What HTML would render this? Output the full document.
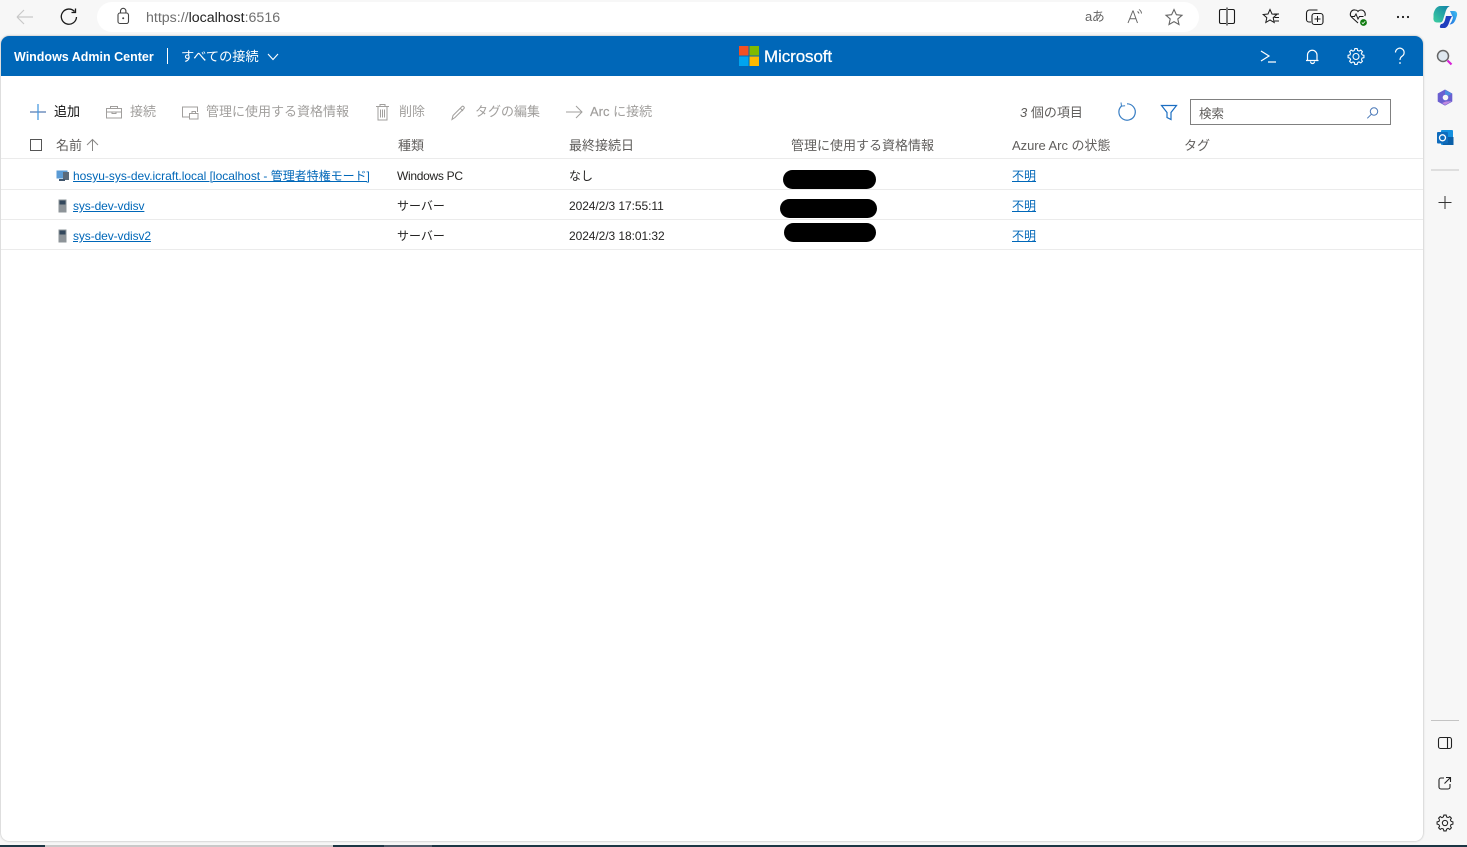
<!DOCTYPE html>
<html lang="ja"><head><meta charset="utf-8"><title>Windows Admin Center</title>
<style>
html,body{margin:0;padding:0;width:1467px;height:847px;overflow:hidden;background:#f7f7f7;font-family:"Liberation Sans","Noto Sans CJK JP",sans-serif;}
.t{position:absolute;white-space:nowrap;line-height:18px;font-size:12px;}
.g{color:#a19f9d}
.h{color:#605e5c;font-size:13px}
.b{color:#252423}
a{color:#0067b8;text-decoration:underline}
svg{position:absolute;overflow:visible}
.l{position:absolute;left:1px;width:1422px;height:1px;background:#ebebeb}
.r{position:absolute;background:#000;border-radius:10px}
</style></head><body>
<!-- address bar -->
<div style="position:absolute;left:97px;top:2px;width:1102px;height:30px;background:#fff;border-radius:15px"></div>
<svg style="left:0;top:0" width="1467" height="36" fill="none">
<defs>
<linearGradient id="cl" x1="0" y1="1" x2="1" y2="0"><stop offset="0" stop-color="#3fd0a0"/><stop offset="1" stop-color="#0f7fa8"/></linearGradient>
<linearGradient id="cr" x1="0" y1="1" x2="1" y2="0"><stop offset="0" stop-color="#1f6fe0"/><stop offset="1" stop-color="#3fc0f0"/></linearGradient>
</defs>
<path d="M17 17H33M17 17l7-7M17 17l7 7" stroke="#c8c8c8" stroke-width="1.2"/>
<path d="M74.5 11.5A7.6 7.6 0 1 0 76.5 17M75.5 8.5v4h-4" stroke="#1a1a1a" stroke-width="1.3"/>
<rect x="118" y="13" width="10.5" height="10.5" rx="2" stroke="#444" stroke-width="1.1"/><path d="M120.5 13v-2a2.7 2.7 0 0 1 5.400 0v2" stroke="#444" stroke-width="1.1"/><circle cx="123.200" cy="18.300" r="1" fill="#444"/>
<path d="M1133 10.500l-5 12.500M1133 10.500l4.500 12.500M1130 18.800h6" stroke="#666" stroke-width="1"/><path d="M1139 9.500a5 5 0 0 1 2.500 4M1137.500 11.500a3 3 0 0 1 1.500 2" stroke="#666"/>
<path d="M1174 9.500l2.400 5.200 5.600.6-4.200 3.700 1.200 5.500-5-2.900-5 2.900 1.200-5.500-4.200-3.700 5.600-.6z" stroke="#666" stroke-width="1.100"/>
<path d="M1226 10h-5a1.500 1.500 0 0 0-1.500 1.500v11a1.500 1.500 0 0 0 1.500 1.500h5M1228 10h5a1.500 1.500 0 0 1 1.500 1.500v11a1.500 1.500 0 0 1-1.500 1.500h-5M1227 8v18" stroke="#1a1a1a" stroke-width="1.100" transform="translate(0 -.5)"/>
<path d="M1270 9.500l2 4.500 4.800.5-3.600 3.200 1 4.800-4.200-2.500-4.200 2.500 1-4.800-3.600-3.200 4.800-.5z" stroke="#1a1a1a" stroke-width="1"/><path d="M1274 14h5M1274.500 17.500h4.500M1274.500 21h4.500" stroke="#1a1a1a" stroke-width="1"/>
<path d="M1311 22h-2a2.500 2.500 0 0 1-2.500-2.500v-6.500a3 3 0 0 1 3-3h8" stroke="#1a1a1a" stroke-width="1.100"/><rect x="1312" y="13.500" width="11" height="11" rx="2.500" stroke="#1a1a1a" stroke-width="1.100"/><path d="M1317.500 16v6M1314.500 19h6" stroke="#1a1a1a" stroke-width="1"/>
<path d="M1358 23l-6-5.500a4.200 4.200 0 0 1 3-7.500c1.500 0 2.500.7 3 1.500.5-.8 1.500-1.500 3-1.500a4.200 4.200 0 0 1 3.800 6" stroke="#1a1a1a" stroke-width="1.100"/><path d="M1351 16.500h3.500l1.500-2.500 2 5 1.500-2.500h4" stroke="#1a1a1a" stroke-width="1"/><circle cx="1363.500" cy="22.500" r="3.400" fill="#107c10"/><path d="M1361.800 22.500l1.200 1.200 2.200-2.300" stroke="#fff" stroke-width=".8"/>
<circle cx="1398" cy="17" r="1.100" fill="#1a1a1a"/><circle cx="1403" cy="17" r="1.100" fill="#1a1a1a"/><circle cx="1408" cy="17" r="1.100" fill="#1a1a1a"/>
<path d="M1441 24c2 0 3-1 4-4l1-4h6l-2 4c-1 3-2 7-5 8h-4c-1.500 0-1.500-2 0-4z" fill="#1f3fbf"/>
<path d="M1450 11h4c2.500 0 3.500 2 3 4.500l-1 3c-1 3.500-3 6-6.500 6 2-2 2.500-4 3.500-7z" fill="url(#cr)"/>
<path d="M1433.500 14c.8-4 3-8 7-8h9.500c-2.500 1-3.500 3-4.500 6l-2.500 8c-.5 1.500-1.500 2.500-3 2.500h-3c-2.500 0-4-2-3.500-5z" fill="url(#cl)"/>
</svg>
<div class="t" style="left:146px;top:9px;font-size:14.200px;color:#6f6f6f">https://<span style="color:#222">localhost</span>:6516</div>
<div class="t" style="left:1085px;top:8px;font-size:13px;color:#666;letter-spacing:-.5px">aあ</div>

<!-- app panel -->
<div style="position:absolute;left:1px;top:36px;width:1422px;height:805px;background:#fff;border-radius:8px;box-shadow:0 0 2px rgba(0,0,0,.3);overflow:hidden">
<div style="height:40px;background:#0067b8"></div>
</div>
<div class="t" style="left:14px;top:48px;font-size:12.500px;font-weight:bold;color:#fff">Windows Admin Center</div>
<div style="position:absolute;left:167px;top:48px;width:1px;height:16px;background:#fff"></div>
<div class="t" style="left:181px;top:48px;font-size:13.200px;color:#fff">すべての接続</div>
<svg style="left:0;top:0" width="1467" height="847" fill="none">
<path d="M268 54l5 5.500 5-5.500" stroke="#fff" stroke-width="1.100"/>
<rect x="739" y="46" width="9.500" height="9.500" fill="#f25022"/><rect x="749.500" y="46" width="9.500" height="9.500" fill="#7fba00"/><rect x="739" y="56.500" width="9.500" height="9.500" fill="#00a4ef"/><rect x="749.500" y="56.500" width="9.500" height="9.500" fill="#ffb900"/>
<path d="M1261 51l8 5-8 5M1268 62h8" stroke="#fff" stroke-width="1.200"/>
<path d="M1306 60.500h12.500M1307.500 60.500v-5.500a4.700 4.700 0 0 1 9.500 0v5.500M1310.500 61.500a2 2 0 0 0 4 0" stroke="#fff" stroke-width="1.200"/>
<g transform="translate(1356 56.500) scale(1.150)" stroke="#fff" stroke-width=".95"><circle r="2.600"/><path d="M-1.400-5.200L-1-6.900H1L1.400-5.200Q2.100-5 2.700-4.700"/><path transform="rotate(45)" d="M-1.400-5.200L-1-6.900H1L1.400-5.200Q2.100-5 2.700-4.700"/><path transform="rotate(90)" d="M-1.400-5.200L-1-6.900H1L1.400-5.200Q2.100-5 2.700-4.700"/><path transform="rotate(135)" d="M-1.400-5.200L-1-6.900H1L1.400-5.200Q2.100-5 2.700-4.700"/><path transform="rotate(180)" d="M-1.400-5.200L-1-6.900H1L1.400-5.200Q2.100-5 2.700-4.700"/><path transform="rotate(225)" d="M-1.400-5.200L-1-6.900H1L1.400-5.200Q2.100-5 2.700-4.700"/><path transform="rotate(270)" d="M-1.400-5.200L-1-6.900H1L1.400-5.200Q2.100-5 2.700-4.700"/><path transform="rotate(315)" d="M-1.400-5.200L-1-6.900H1L1.400-5.200Q2.100-5 2.700-4.700"/></g>
<path d="M1395.500 52.500a4.300 4.300 0 1 1 6.800 3.500c-1.500 1-2.300 1.800-2.300 4" stroke="#fff" stroke-width="1.200"/><circle cx="1400" cy="63" r=".9" fill="#fff"/>

<!-- toolbar icons -->
<path d="M30 112h16" stroke="#5b7fb5" stroke-width="1.300"/><path d="M38 104v16" stroke="#4a9be0" stroke-width="1.300"/>
<g stroke="#a19f9d" stroke-width="1"><rect x="106.500" y="108.500" width="15" height="9.500"/><path d="M110.500 108.500v-2h7v2M106.500 112h15M112 112v1.500h4V112"/>
<path d="M190 117h-7.500v-10h15v5"/><rect x="189.500" y="113.500" width="8.500" height="5.500"/><path d="M192 113.500v-2h3.500v2"/>
<path d="M376 106.500h13M378 106.500v13.500h9v-13.500M380 106.500v-2h5v2M380.500 109.500v8M382.500 109.500v8M384.500 109.500v8"/>
<path d="M452 119.500l1-4 9-9c1-1 3 1 2 2l-9 9zM460 108l3 3"/>
<path d="M566 112h16M576 106l6 6-6 6"/></g>

<path d="M1127 103.800A8.200 8.200 0 1 1 1121.500 106" stroke="#3a7fc4" stroke-width="1.200"/><path d="M1121 102.500l.5 3.600 3.600-.3" stroke="#3a7fc4" stroke-width="1"/>
<path d="M1161.500 105.500h15l-5.500 7v7l-4-2v-5z" stroke="#1b6ec2" stroke-width="1.200"/>
<circle cx="1374" cy="111.500" r="3.700" stroke="#4a78b8" stroke-width="1"/><path d="M1371.300 114.300l-4 4" stroke="#4a78b8" stroke-width="1"/>

<rect x="30.500" y="139.500" width="11" height="11" stroke="#555" stroke-width="1"/>
<path d="M92.500 151v-11.500M87 145l5.500-5.500 5.500 5.500" stroke="#8a8886" stroke-width="1"/>

<!-- row icons -->
<rect x="56.500" y="170.500" width="11" height="8" fill="#5b9bd5"/><rect x="63" y="172" width="6" height="8" fill="#5a6a7a"/><rect x="59" y="179" width="6" height="2" fill="#40566d"/>
<rect x="58.500" y="199.500" width="8" height="13" fill="#8e9499"/><rect x="59.500" y="200.500" width="6" height="4" fill="#33475c"/>
<rect x="58.500" y="229.500" width="8" height="13" fill="#8e9499"/><rect x="59.500" y="230.500" width="6" height="4" fill="#33475c"/>

<!-- sidebar -->
<circle cx="1443" cy="56" r="5.500" fill="#dfe8f0" stroke="#666" stroke-width="1.500"/><path d="M1447.500 60.500l4 4" stroke="#d622d6" stroke-width="2.200"/>
<path d="M1445 90l6.800 3.800v7.500L1445 105l-6.800-3.700v-7.500z" fill="#6a5fd0" stroke="#6a5fd0" stroke-linejoin="round"/><path d="M1445 90l6.800 3.800-3.500 2-3.300-1.500z" fill="#4a8fe0"/><path d="M1451.800 101.300L1445 105l-3-2 4-1.500z" fill="#c08ae0"/><circle cx="1445.500" cy="97.500" r="2.800" fill="#f7f7f7"/>
<rect x="1441" y="130" width="12" height="15" rx="1" fill="#1490df"/><rect x="1443" y="137" width="10.500" height="8" fill="#0a5fa8"/><rect x="1437" y="132" width="11" height="11.500" rx="1" fill="#0f6cbd"/><circle cx="1442.500" cy="137.800" r="3" stroke="#fff" stroke-width="1.300"/>
<path d="M1431 170h28" stroke="#c4c4c4"/>
<path d="M1445 196v13M1438.500 202.500h13" stroke="#333" stroke-width="1"/>
<path d="M1431 720.500h28" stroke="#c4c4c4"/>
<rect x="1438.500" y="737.500" width="13" height="11" rx="2" stroke="#222" stroke-width="1.100"/><path d="M1447.500 737.500v11" stroke="#222" stroke-width="1.100"/>
<path d="M1444 778h-3a2 2 0 0 0-2 2v7a2 2 0 0 0 2 2h7a2 2 0 0 0 2-2v-3M1444.500 783.500l6-6M1446 777.500h4.500v4.500" stroke="#222" stroke-width="1.100"/>
<g transform="translate(1445 823) scale(1.150)" stroke="#222" stroke-width=".9"><circle r="2.300"/><path d="M-1.400-5.200L-1-6.900H1L1.400-5.200Q2.100-5 2.700-4.700"/><path transform="rotate(45)" d="M-1.400-5.200L-1-6.900H1L1.400-5.200Q2.100-5 2.700-4.700"/><path transform="rotate(90)" d="M-1.400-5.200L-1-6.900H1L1.400-5.200Q2.100-5 2.700-4.700"/><path transform="rotate(135)" d="M-1.400-5.200L-1-6.900H1L1.400-5.200Q2.100-5 2.700-4.700"/><path transform="rotate(180)" d="M-1.400-5.200L-1-6.900H1L1.400-5.200Q2.100-5 2.700-4.700"/><path transform="rotate(225)" d="M-1.400-5.200L-1-6.900H1L1.400-5.200Q2.100-5 2.700-4.700"/><path transform="rotate(270)" d="M-1.400-5.200L-1-6.900H1L1.400-5.200Q2.100-5 2.700-4.700"/><path transform="rotate(315)" d="M-1.400-5.200L-1-6.900H1L1.400-5.200Q2.100-5 2.700-4.700"/></g>
</svg>
<div class="t" style="left:764px;top:46px;font-size:17px;line-height:22px;color:#fff;letter-spacing:-.1px;-webkit-text-stroke:.25px #fff">Microsoft</div>

<!-- toolbar -->
<div class="t b" style="left:54px;top:103px;font-size:13px;color:#111">追加</div>
<div class="t g" style="left:130px;top:103px;font-size:13px">接続</div>
<div class="t g" style="left:206px;top:103px;font-size:13px">管理に使用する資格情報</div>
<div class="t g" style="left:399px;top:103px;font-size:13px">削除</div>
<div class="t g" style="left:475px;top:103px;font-size:13px">タグの編集</div>
<div class="t g" style="left:590px;top:103px;font-size:13px"><span style="-webkit-text-stroke:.2px #a19f9d">Arc</span> に接続</div>
<div class="t h" style="left:1020px;top:104px"><i>3</i> 個の項目</div>
<div style="position:absolute;left:1190px;top:99px;width:199px;height:24px;border:1px solid #808080"></div>
<div class="t h" style="left:1199px;top:105px;font-size:12.500px">検索</div>

<!-- header -->
<div class="t h" style="left:56px;top:137px">名前</div>
<div class="t h" style="left:398px;top:137px">種類</div>
<div class="t h" style="left:569px;top:137px">最終接続日</div>
<div class="t h" style="left:791px;top:137px">管理に使用する資格情報</div>
<div class="t h" style="left:1012px;top:137px;letter-spacing:-.05px">Azure Arc の状態</div>
<div class="t h" style="left:1184px;top:137px">タグ</div>
<div class="l" style="top:158px"></div><div class="l" style="top:189px"></div><div class="l" style="top:219px"></div><div class="l" style="top:249px"></div>

<!-- rows -->
<div class="t" style="left:73px;top:167px;letter-spacing:-.02px"><a>hosyu-sys-dev.icraft.local [localhost - 管理者特権モード]</a></div>
<div class="t" style="left:73px;top:197px;letter-spacing:-.1px"><a>sys-dev-vdisv</a></div>
<div class="t" style="left:73px;top:227px;letter-spacing:-.1px"><a>sys-dev-vdisv2</a></div>
<div class="t b" style="left:397px;top:167px;letter-spacing:-.3px">Windows PC</div>
<div class="t b" style="left:397px;top:197px">サーバー</div>
<div class="t b" style="left:397px;top:227px">サーバー</div>
<div class="t b" style="left:569px;top:167px">なし</div>
<div class="t b" style="left:569px;top:197px;letter-spacing:-.07px">2024/2/3 17:55:11</div>
<div class="t b" style="left:569px;top:227px;letter-spacing:-.07px">2024/2/3 18:01:32</div>
<div class="t" style="left:1012px;top:167px"><a>不明</a></div>
<div class="t" style="left:1012px;top:197px"><a>不明</a></div>
<div class="t" style="left:1012px;top:227px"><a>不明</a></div>
<div class="r" style="left:783px;top:170px;width:93px;height:19px"></div>
<div class="r" style="left:780px;top:199px;width:97px;height:19px"></div>
<div class="r" style="left:784px;top:223px;width:92px;height:19px"></div>

<!-- taskbar strip -->
<div style="position:absolute;left:0;top:845px;width:1467px;height:2px;background:#1c3644"></div>
<div style="position:absolute;left:45px;top:845px;width:288px;height:2px;background:#c9c9c9"></div>
<div style="position:absolute;left:384px;top:845px;width:48px;height:2px;background:#4d5a68"></div>
</body></html>
